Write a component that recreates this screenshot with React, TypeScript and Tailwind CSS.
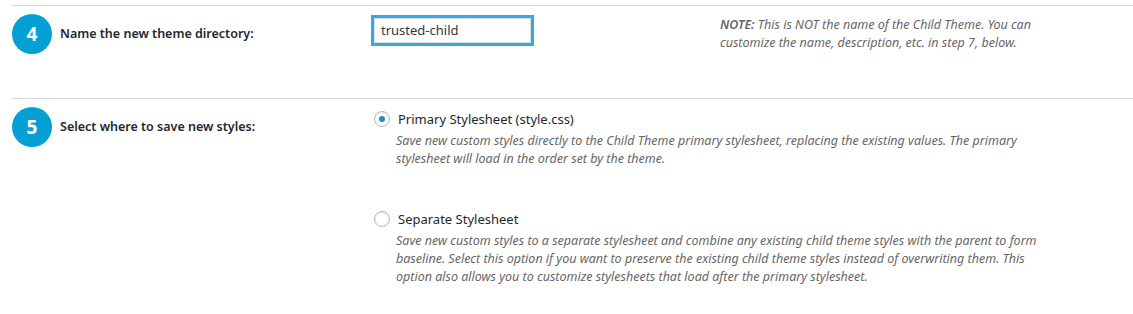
import type { ReactNode } from "react";

const font = { fontFamily: '"Noto Sans", "Open Sans", sans-serif' };

function StepBadge({ n }: { n: number }) {
    return (
        <div className="flex h-[40px] w-[40px] shrink-0 items-center justify-center rounded-full bg-[#05a0d3] text-[19px] font-bold text-white">
            {n}
        </div>
    );
}

function Radio({ checked }: { checked?: boolean }) {
    return (
        <span className="flex h-[16px] w-[16px] shrink-0 items-center justify-center rounded-full border border-[#b4b9be] bg-white shadow-[inset_0_1px_2px_rgba(0,0,0,0.1)]">
            {checked && <span className="h-[6px] w-[6px] rounded-full bg-[#1e8cbe]" />}
        </span>
    );
}

function Option({ checked, label, children }: { checked?: boolean; label: string; children: ReactNode }) {
    return (
        <div>
            <div className="flex h-[18px] items-center">
                <span className="ml-[3px]"><Radio checked={checked} /></span>
                <span className="ml-[8px] text-[13px] leading-[18px] text-[#23282d]">{label}</span>
            </div>
            <p className="mt-[4px] pl-[25px] text-[12.5px] italic leading-[18px] text-[#666]">{children}</p>
        </div>
    );
}

export default function App() {
    return (
        <div className="h-[314px] w-[1133px] overflow-hidden bg-white" style={font}>
            <div className="pt-[5px]">
                <div className="ml-[12px] flex h-[93px] border-t border-[#dcdcde] pt-[8px]">
                    <div className="flex w-[359px] items-start">
                        <StepBadge n={4} />
                        <span className="ml-[8px] mt-[10px] text-[12.5px] font-semibold leading-[20px] text-[#23282d]">
                            Name the new theme directory:
                        </span>
                    </div>
                    <div className="w-[349px] pt-[1px]">
                        <div className="h-[31px] w-[163px] border-[3px] border-[#33a9ea]">
                            <div className="flex h-full items-center border border-[#ddd] bg-white pl-[6px] text-[13px] text-[#32373c]">
                                trusted-child
                            </div>
                        </div>
                    </div>
                    <p className="mt-[2px] text-[12.5px] italic leading-[18px] text-[#666]">
                        <strong className="font-semibold">NOTE:</strong> This is NOT the name of the Child Theme. You can
                        <br />
                        customize the name, description, etc. in step 7, below.
                    </p>
                </div>

                <div className="ml-[12px] flex border-t border-[#dcdcde] pt-[8px]">
                    <div className="flex w-[359px] items-start">
                        <StepBadge n={5} />
                        <span className="ml-[8px] mt-[10px] text-[12.5px] font-semibold leading-[20px] text-[#23282d]">
                            Select where to save new styles:
                        </span>
                    </div>
                    <div className="mt-[3px] flex flex-col gap-[42px]">
                        <Option checked label="Primary Stylesheet (style.css)">
                            Save new custom styles directly to the Child Theme primary stylesheet, replacing the existing values. The primary
                            <br />
                            stylesheet will load in the order set by the theme.
                        </Option>
                        <Option label="Separate Stylesheet">
                            Save new custom styles to a separate stylesheet and combine any existing child theme styles with the parent to form
                            <br />
                            baseline. Select this option if you want to preserve the existing child theme styles instead of overwriting them. This
                            <br />
                            option also allows you to customize stylesheets that load after the primary stylesheet.
                        </Option>
                    </div>
                </div>
            </div>
        </div>
    );
}
